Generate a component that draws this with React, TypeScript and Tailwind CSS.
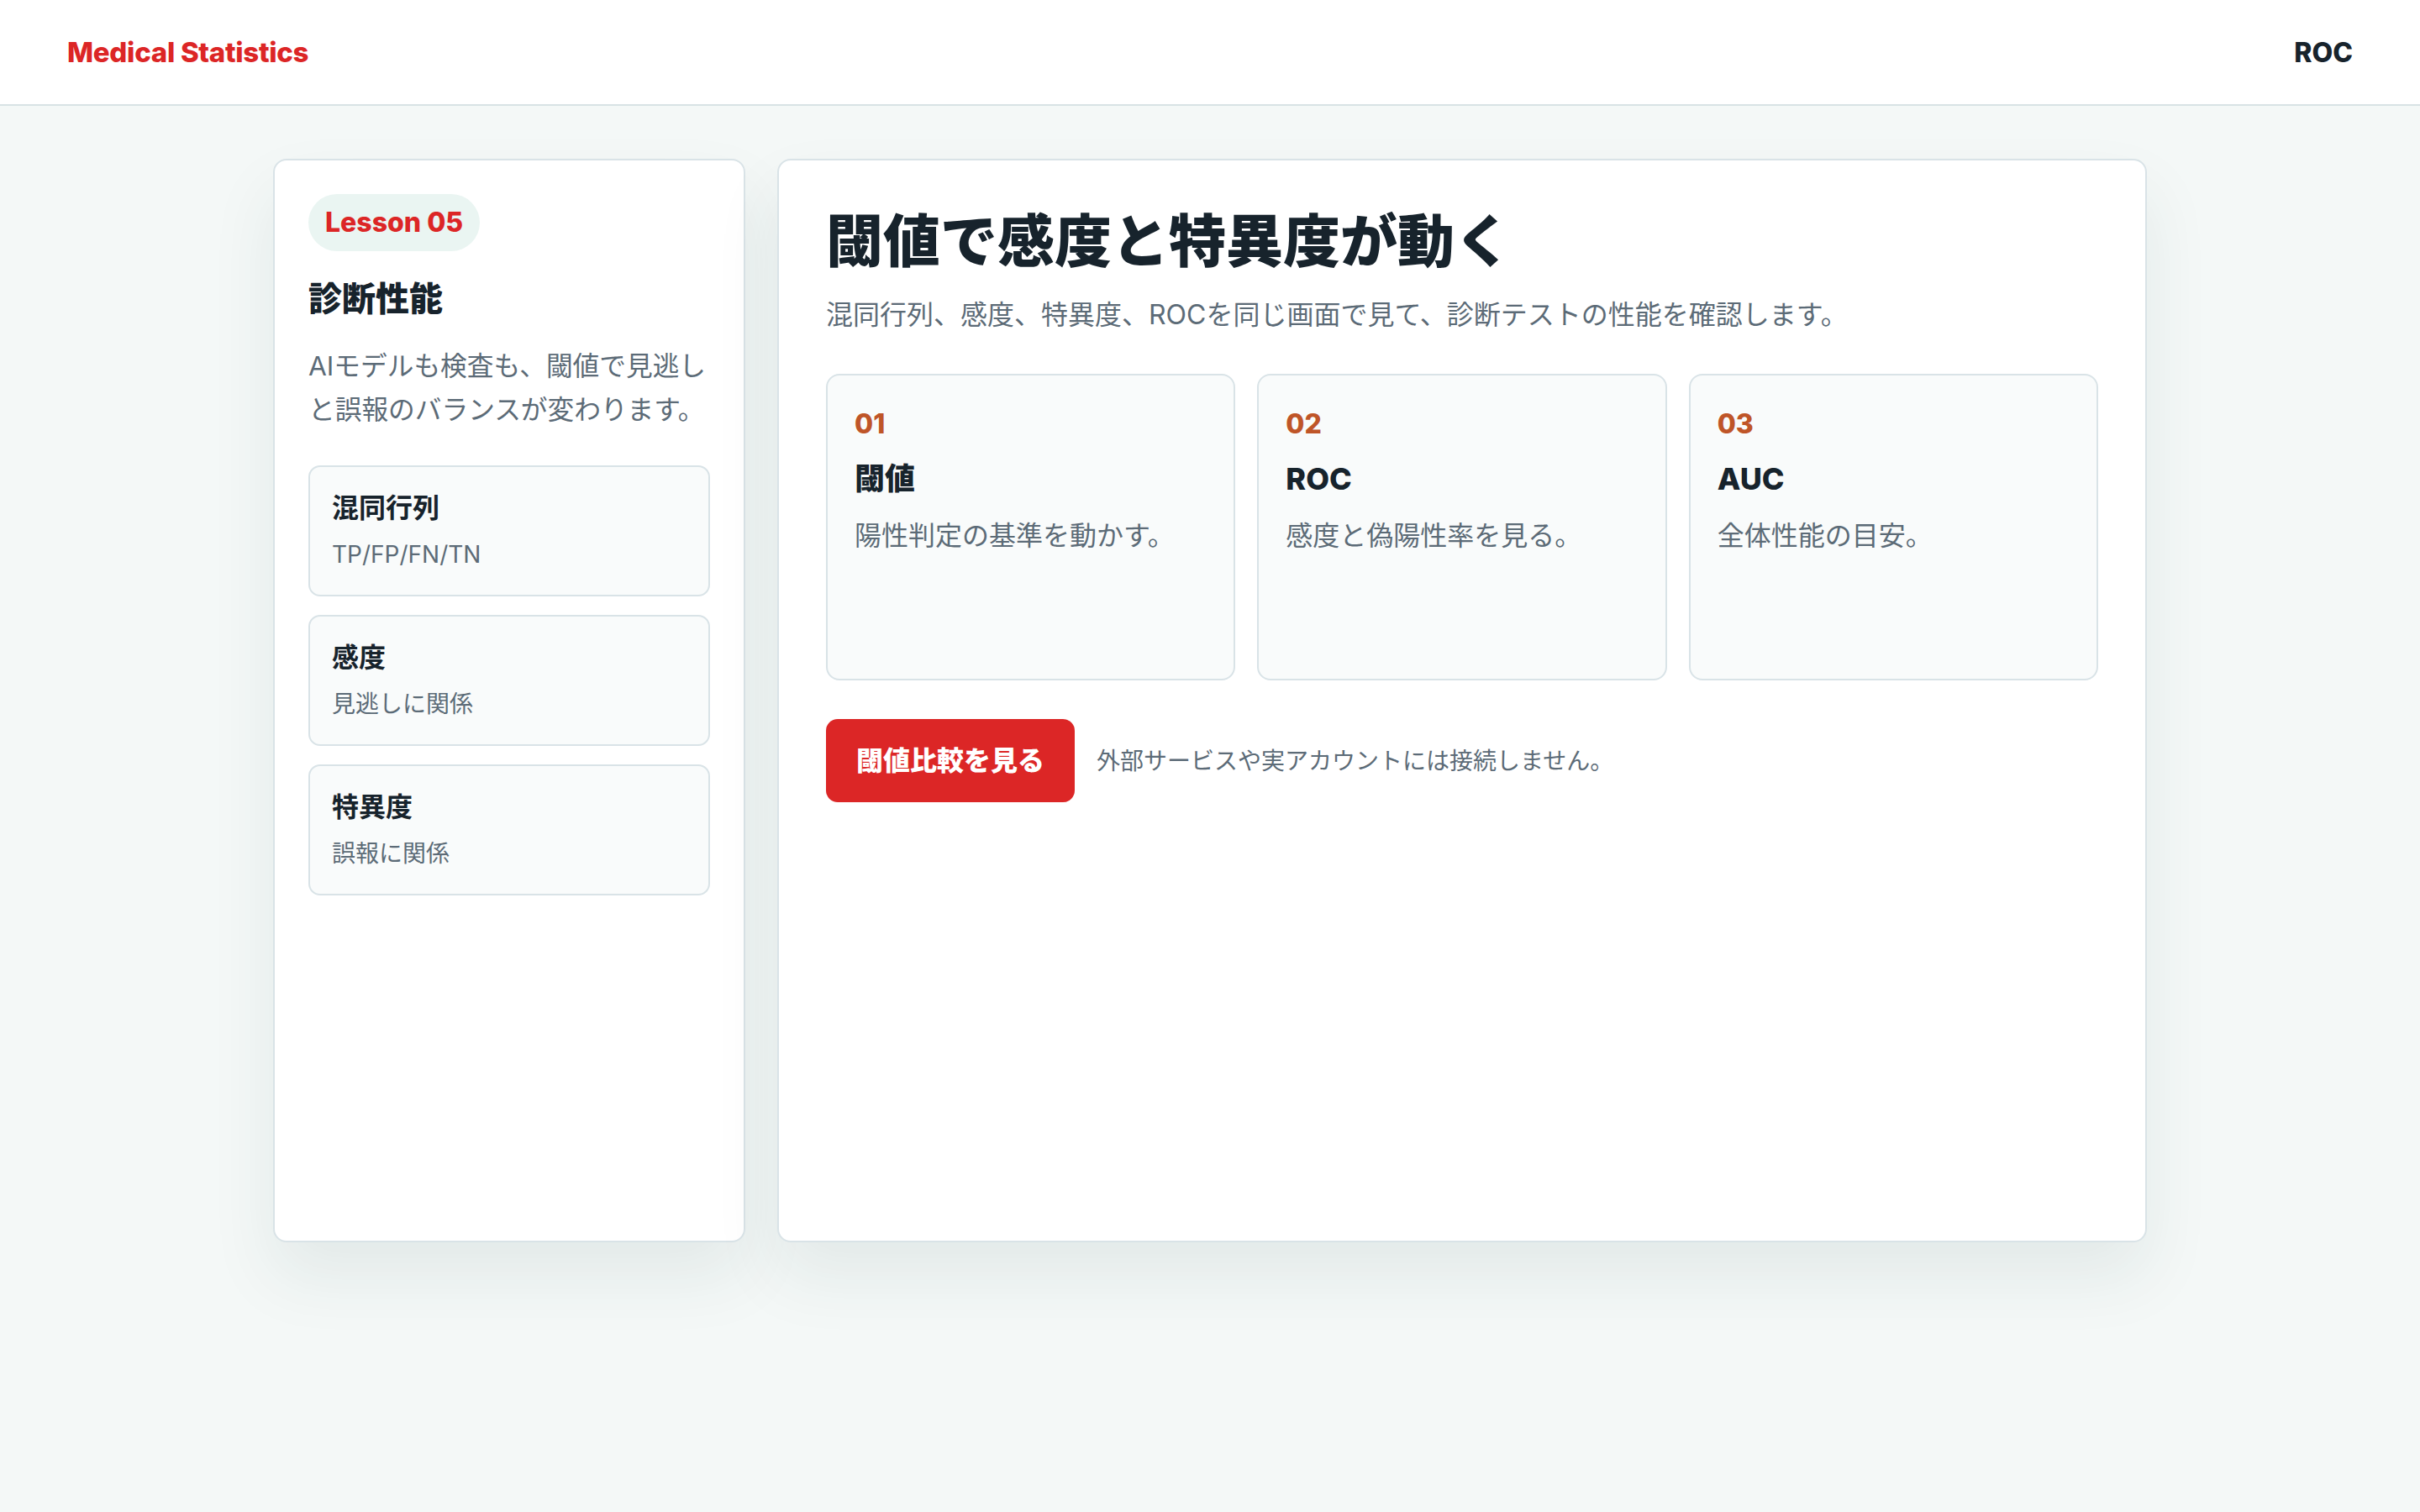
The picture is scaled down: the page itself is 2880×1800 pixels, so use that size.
const steps = [
  { no: "01", title: "閾値", desc: "陽性判定の基準を動かす。" },
  { no: "02", title: "ROC", desc: "感度と偽陽性率を見る。" },
  { no: "03", title: "AUC", desc: "全体性能の目安。" },
];

const topics = [
  { title: "混同行列", sub: "TP/FP/FN/TN" },
  { title: "感度", sub: "見逃しに関係" },
  { title: "特異度", sub: "誤報に関係" },
];

const font = "font-['Inter','Noto_Sans_CJK_JP',sans-serif]";

export default function App() {
  return (
    <div className={`min-h-screen bg-[#f4f8f7] text-[#17232c] ${font}`}>
      <header className="h-[126px] bg-white border-b-2 border-[#d8e3e5] flex items-center justify-between px-[80px]">
        <span className="text-[33px] font-extrabold text-[#dc2626] tracking-[-0.3px] pt-[2px]">
          Medical Statistics
        </span>
        <span className="text-[32px] font-extrabold text-[#17232c] pt-[2px]">ROC</span>
      </header>

      <main className="w-[2230px] mx-auto pt-[63px] pb-[80px] grid grid-cols-[562px_1fr] gap-[38px]">
        {/* sidebar */}
        <aside className="h-[1290px] bg-white border-2 border-[#d9e3e7] rounded-[16px] p-[40px] shadow-[0_40px_80px_rgba(30,60,60,0.08)]">
          <span className="inline-block bg-[#eaf5f2] text-[#dc2626] text-[32px] font-extrabold leading-[40px] px-[20px] py-[14px] rounded-full">
            Lesson 05
          </span>
          <h2 className="mt-[30px] text-[40px] font-extrabold leading-[54px]">
            診断性能
          </h2>
          <p className="mt-[27px] text-[31.7px] leading-[52px] text-[#5c6b77]">
            AIモデルも検査も、閾値で見逃しと誤報のバランスが変わります。
          </p>
          <div className="mt-[40px] flex flex-col gap-[22px]">
            {topics.map((t) => (
              <div
                key={t.title}
                className="bg-[#f9fbfb] border-2 border-[#d9e3e7] rounded-[14px] px-[26px] pt-[28px] pb-[28px]"
              >
                <div className="text-[32px] font-bold leading-[42px]">
                  {t.title}
                </div>
                <div className="mt-[14px] text-[28px] leading-[40px] text-[#5c6b77]">
                  {t.sub}
                </div>
              </div>
            ))}
          </div>
        </aside>

        {/* main panel */}
        <section className="h-[1290px] bg-white border-2 border-[#d9e3e7] rounded-[16px] px-[56px] pt-[56px] shadow-[0_40px_80px_rgba(30,60,60,0.08)]">
          <h1 className="text-[68px] font-extrabold leading-[80px]">
            閾値で感度と特異度が動く
          </h1>
          <p className="mt-[22px] text-[32px] leading-[51px] text-[#5c6b77]">
            混同行列、感度、特異度、ROCを同じ画面で見て、診断テストの性能を確認します。
          </p>

          <div className="mt-[45px] grid grid-cols-3 gap-[26px]">
            {steps.map((s) => (
              <div
                key={s.no}
                className="h-[365px] bg-[#f9fbfb] border-2 border-[#d9e3e7] rounded-[16px] px-[32px] pt-[34px]"
              >
                <div className="text-[32px] font-extrabold leading-[48px] text-[#bf5528]">
                  {s.no}
                </div>
                <div className="mt-[18px] text-[36px] font-extrabold leading-[47px]">
                  {s.title}
                </div>
                <div className="mt-[20px] text-[32px] leading-[48px] text-[#5c6b77]">
                  {s.desc}
                </div>
              </div>
            ))}
          </div>

          <div className="mt-[46px] flex items-center gap-[26px]">
            <button className="h-[99px] px-[36px] rounded-[14px] bg-[#dc2626] text-white text-[32px] font-extrabold">
              閾値比較を見る
            </button>
            <span className="text-[28px] text-[#5c6b77]">
              外部サービスや実アカウントには接続しません。
            </span>
          </div>
        </section>
      </main>
    </div>
  );
}
